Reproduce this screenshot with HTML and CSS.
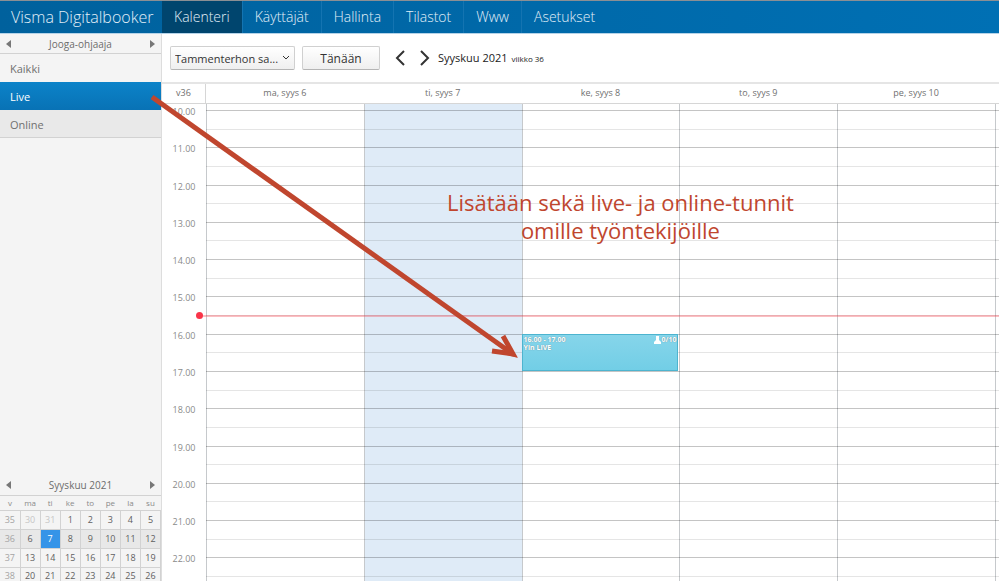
FILE: index.html
```html
<!DOCTYPE html>
<html lang="fi">
<head>
    <meta charset="UTF-8">
    <meta name="viewport" content="width=device-width, initial-scale=1.0">
    <title>Visma Digitalbooker - Kalenteri</title>
    <link rel="stylesheet" href="styles.css">
</head>
<body>

    <header class="topbar">
        <a class="brand" href="#">Visma Digitalbooker</a>
        <nav class="menu">
            <a class="active" href="#">Kalenteri</a>
            <a href="#">Käyttäjät</a>
            <a href="#">Hallinta</a>
            <a href="#">Tilastot</a>
            <a href="#">Www</a>
            <a href="#">Asetukset</a>
        </nav>
    </header>

    <div class="content">
        <aside class="sidebar">
            <div class="switcher">
                <button type="button" class="arrow" aria-label="Edellinen ryhmä"><svg width="5" height="8"><path d="M5 0v8L0 4z"/></svg></button>
                <span>Jooga-ohjaaja</span>
                <button type="button" class="arrow" aria-label="Seuraava ryhmä"><svg width="5" height="8"><path d="M0 0v8l5-4z"/></svg></button>
            </div>
            <nav class="people">
                <a href="#">Kaikki</a>
                <a class="selected" href="#">Live</a>
                <a class="shaded" href="#">Online</a>
            </nav>

            <!-- Month view -->
            <div class="month">
                <div class="switcher">
                    <button type="button" class="arrow" aria-label="Edellinen kuukausi"><svg width="5" height="8"><path d="M5 0v8L0 4z"/></svg></button>
                    <span>Syyskuu 2021</span>
                    <button type="button" class="arrow" aria-label="Seuraava kuukausi"><svg width="5" height="8"><path d="M0 0v8l5-4z"/></svg></button>
                </div>
                <table class="dates">
                    <thead>
                        <tr><th>v</th><th>ma</th><th>ti</th><th>ke</th><th>to</th><th>pe</th><th>la</th><th>su</th></tr>
                    </thead>
                    <tbody>
                        <tr><td class="dim">35</td><td class="other">30</td><td class="other">31</td><td>1</td><td>2</td><td>3</td><td>4</td><td>5</td></tr>
                        <tr class="current"><td class="dim">36</td><td>6</td><td class="today">7</td><td>8</td><td>9</td><td>10</td><td>11</td><td>12</td></tr>
                        <tr><td class="dim">37</td><td>13</td><td>14</td><td>15</td><td>16</td><td>17</td><td>18</td><td>19</td></tr>
                        <tr><td class="dim">38</td><td>20</td><td>21</td><td>22</td><td>23</td><td>24</td><td>25</td><td>26</td></tr>
                    </tbody>
                </table>
            </div>
        </aside>

        <main class="calendar">
            <div class="toolbar">
                <div class="location">
                    <select class="control" aria-label="Toimipiste">
                        <option>Tammenterhon sa...</option>
                    </select>
                    <svg width="9" height="6"><path d="M1 1l3 3 3-3"/></svg>
                </div>
                <button type="button" class="control today-button">Tänään</button>
                <button type="button" class="step" aria-label="Edellinen viikko"><svg width="10" height="16"><path d="M9 1L2 8l7 7"/></svg></button>
                <button type="button" class="step" aria-label="Seuraava viikko"><svg width="10" height="16"><path d="M1 1l7 7-7 7"/></svg></button>
                <h1>Syyskuu 2021 <small>viikko 36</small></h1>
            </div>

            <div class="week-head">
                <span>v36</span>
                <span>ma, syys 6</span>
                <span>ti, syys 7</span>
                <span>ke, syys 8</span>
                <span>to, syys 9</span>
                <span>pe, syys 10</span>
            </div>

            <div class="week">
                <!-- days, hour rows and labels are added by the script -->
                <div class="now"></div>
                <a class="event" href="#">
                    <span>16.00 - 17.00<br>Yin LIVE</span>
                    <span class="seats"><svg width="7" height="8"><path d="M2 0h3v4l2 2v2H0V6l2-2z"/></svg>0/10</span>
                </a>
            </div>
        </main>
    </div>

    <!-- Notes drawn over the calendar -->
    <svg class="pointer" width="999" height="581" aria-hidden="true">
        <path class="shaft" d="M152 97L510 352"/>
        <path class="head" d="M503 336L513 354L492 351"/>
        <path class="tip" d="M507 345l11 13-15-4z"/>
    </svg>
    <p class="note">Lisätään sekä live- ja online-tunnit<br>omille työntekijöille</p>

    <script src="week.js"></script>
</body>
</html>
```

FILE: styles.css
```css
* {
    box-sizing: border-box;
}

body {
    display: flex;
    flex-direction: column;
    height: 100vh;
    margin: 0;
    overflow: hidden;
    color: #707070;
    background-color: #ffffff;
    font-family: "Open Sans", "Noto Sans", sans-serif;
    font-size: 10px;
}

a {
    color: inherit;
    text-decoration: none;
}

button {
    padding: 0;
    border: 0;
    background: none;
    font-family: inherit;
}

svg {
    display: block;
}

/* Top bar */
.topbar {
    display: flex;
    flex: none;
    height: 34px;
    border-top: 1px solid #8b8f94;
    border-bottom: 1px solid #b5d3e8;
    color: #e2eff8;
    background: linear-gradient(90deg, #00619d, #0070b4);
    line-height: 32px;
}

.brand {
    width: 162px;
    padding-left: 11px;
    font-size: 16px;
    font-weight: 300;
    white-space: nowrap;
}

.menu {
    display: flex;
    font-size: 14px;
    font-weight: 300;
}

.menu a {
    padding: 0 12px;
    border-right: 1px solid #1474b1;
}

.menu a:last-child {
    border-right: 0;
}

.menu .active {
    background-color: #00456e;
}

.content {
    display: flex;
    flex: 1;
    min-height: 0;
}

/* Sidebar */
.sidebar {
    display: flex;
    flex: none;
    flex-direction: column;
    width: 162px;
    border-right: 1px solid #dddddd;
    background-color: #f4f4f4;
}

.switcher {
    display: flex;
    align-items: center;
    justify-content: space-between;
    height: 20px;
    padding: 0 6px;
    border-bottom: 1px solid #d2d2d2;
    color: #6c6c6c;
}

.arrow svg {
    fill: #777777;
}

.people a {
    display: block;
    height: 28px;
    padding-left: 10px;
    font-size: 11px;
    line-height: 30px;
}

.people .selected {
    color: #ffffff;
    background: linear-gradient(#0c83c9, #0872b5);
}

.people .shaded {
    border-bottom: 1px solid #d2d2d2;
    background-color: #e9e9e9;
}

/* Month view */
.month {
    margin-top: auto;
}

.dates {
    width: 100%;
    border-collapse: collapse;
    table-layout: fixed;
    color: #606060;
    text-align: center;
    font-size: 9px;
    line-height: 12px;
}

.dates th {
    height: 15px;
    padding: 0;
    color: #8a8a8a;
    font-size: 8px;
    font-weight: 400;
}

.dates td {
    height: 19px;
    padding: 0;
    border: 1px solid #d2d2d2;
}

.dates td:first-child {
    border-left: 0;
}

/* The last week runs into the window edge */
.dates tr:last-child td {
    height: 13px;
    padding-top: 3px;
    border-bottom: 0;
    line-height: 10px;
}

.dates .dim {
    color: #a4a4a4;
}

.dates .other {
    color: #c6c6c6;
}

.dates .current {
    background-color: #e8e8e8;
}

.dates .today {
    color: #ffffff;
    background-color: #3594e8;
}

/* Toolbar */
.calendar {
    display: flex;
    flex: 1;
    flex-direction: column;
    min-width: 0;
}

.toolbar {
    display: flex;
    flex: none;
    align-items: center;
    height: 48px;
    padding: 0 8px;
    color: #222222;
}

.control {
    height: 24px;
    border: 1px solid #d0d0d0;
    border-bottom-color: #b5b5b5;
    border-radius: 2px;
    color: #333333;
    background: linear-gradient(#ffffff, #efefef);
    font-family: inherit;
    font-size: 11px;
}

.location {
    display: grid;
    align-items: center;
    width: 125px;
    margin-right: 7px;
}

.location .control,
.location svg {
    grid-area: 1 / 1;
}

.location .control {
    width: 100%;
    padding: 0 4px;
    appearance: none;
}

.location svg {
    justify-self: end;
    margin-right: 4px;
    pointer-events: none;
}

.location path {
    fill: none;
    stroke: #333333;
}

.today-button {
    width: 78px;
    margin-right: 15px;
    font-size: 12px;
}

.step {
    margin-right: 15px;
}

.step + .step {
    margin-right: 8px;
}

.step path {
    fill: none;
    stroke: #333333;
    stroke-width: 2;
}

.toolbar h1 {
    margin: 0;
    font-size: 11px;
    font-weight: 400;
    line-height: 24px;
}

.toolbar small {
    margin-left: 1px;
    font-size: 8px;
}

/* Week */
.week-head,
.week {
    display: grid;
    grid-template-columns: 44px repeat(5, 1fr) 4px;
}

.week-head {
    flex: none;
    height: 22px;
    border-top: 2px solid #e5e5e5;
    border-bottom: 1px solid #d6d6d6;
    font-size: 9px;
    line-height: 18px;
    text-align: center;
}

.week-head span:first-child {
    border-right: 1px solid #d6d6d6;
}

.week {
    flex: 1;
    grid-template-rows: 6px repeat(25, 1fr) 5px;
    min-height: 0;
    overflow: hidden;
}

.day {
    grid-row: 1 / -1;
    border-left: 1px solid #c6c9cc;
}

.day.is-today {
    background-color: #dfebf7;
}

.line {
    grid-column: 2 / -1;
    border-top: 1px solid rgba(0, 0, 0, 0.1);
}

.line.full {
    border-top-color: rgba(0, 0, 0, 0.23);
}

.hour {
    grid-column: 1;
    height: 14px;
    margin-top: -5px;
    color: #8a8a8a;
    font-size: 9px;
    line-height: 14px;
    text-align: center;
}

/* Starts at the half hour after 15.00 */
.now {
    position: relative;
    grid-column: 1 / -1;
    grid-row: 13;
    height: 2px;
    margin-left: 38px;
    background-color: rgba(245, 70, 80, 0.35);
}

.now::before {
    content: "";
    position: absolute;
    top: -3px;
    left: -4px;
    width: 7px;
    height: 7px;
    border-radius: 50%;
    background-color: #f93549;
}

.event {
    display: flex;
    grid-column: 4;
    grid-row: 14 / span 2;
    justify-content: space-between;
    margin-right: 1px;
    padding: 1px;
    border: 1px solid #4db4cf;
    color: #ffffff;
    background: linear-gradient(#86d5ea, #72cee6);
    font-size: 7px;
    font-weight: 700;
    line-height: 8px;
    text-shadow: 0 0 1px #5a7a84;
}

.seats {
    display: flex;
    height: 8px;
}

.seats svg {
    fill: #ffffff;
}

/* Notes */
.pointer {
    position: absolute;
    top: 0;
    left: 0;
    pointer-events: none;
}

.pointer .shaft,
.pointer .head {
    fill: none;
    stroke: #c0462e;
    stroke-width: 5;
}

.pointer .tip {
    fill: #c0462e;
}

.note {
    position: absolute;
    top: 188px;
    left: 447px;
    margin: 0;
    color: #c0462e;
    font-size: 22px;
    line-height: 28px;
    text-align: center;
}
```

FILE: week.js
```js
const week = document.querySelector('.week');
const firstOverlay = week.firstElementChild;

//adds a block to the week grid, under the event and the time line
const add = (className, row, column, text) => {
    const el = document.createElement('div');
    el.className = className;
    if (row) el.style.gridRowStart = row;
    if (column) el.style.gridColumn = column;
    if (text) el.textContent = text;
    week.insertBefore(el, firstOverlay);
};

//five days and the edge of the next one
for (let day = 0; day < 6; day++) {
    add(day === 1 ? 'day is-today' : 'day', 0, day + 2);
}

//half hours from 10.00 to 22.30
for (let half = 0; half < 26; half++) {
    const full = half % 2 === 0;
    add(full ? 'line full' : 'line', half + 2);
    if (full) add('hour', half + 2, 0, (10 + half / 2) + '.00');
}
```
